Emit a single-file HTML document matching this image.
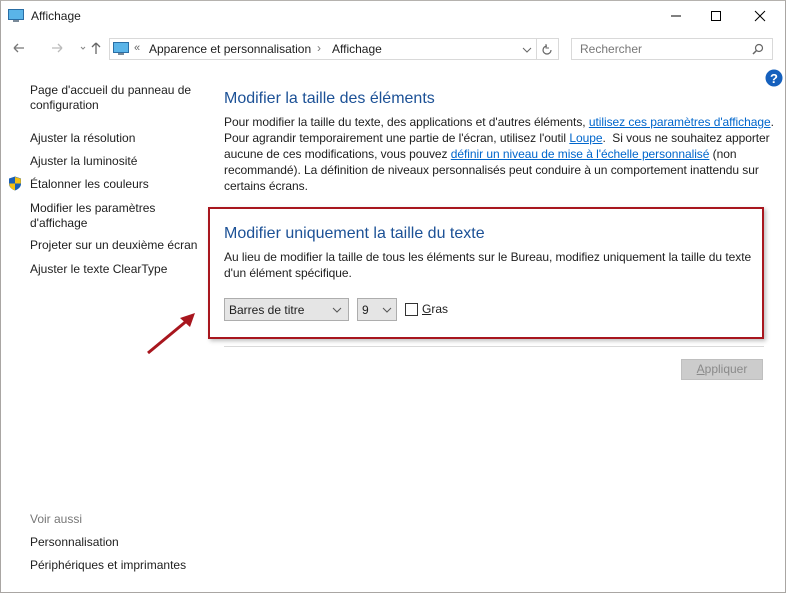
<!DOCTYPE html>
<html><head><meta charset="utf-8"><style>
*{margin:0;padding:0;box-sizing:border-box}
body{width:786px;height:593px;background:#fff;font-family:"Liberation Sans",sans-serif;font-size:12px;color:#1e1e1e;position:relative;overflow:hidden}
.a{position:absolute;white-space:nowrap}
.l{color:#0066cc;text-decoration:underline}
.side{color:#1e1e1e}
.h{color:#1c5196;font-size:16px}
</style></head><body>
<div class="a" style="left:0;top:0;width:786px;height:593px;border:1px solid #a9a6a3;border-top:1px solid #b5b2ae"></div>
<svg class="a" style="left:8px;top:9px" width="16" height="14"><rect x="0.5" y="0.5" width="15" height="10" fill="#5ab4e8" stroke="#2a6ea5"/><rect x="5" y="11" width="6" height="2" fill="#7a8a99"/></svg>
<div class="a" style="left:31px;top:9px;font-size:12px">Affichage</div>
<svg class="a" style="left:668px;top:8px" width="110" height="16"><line x1="3" y1="8" x2="13" y2="8" stroke="#000"/><rect x="43.5" y="3.5" width="9" height="9" fill="none" stroke="#000"/><path d="M87 3 L97 13 M97 3 L87 13" stroke="#000"/></svg>
<svg class="a" style="left:10px;top:40px" width="95" height="16"><path d="M4 8h10M4 8l4-4M4 8l4 4" stroke="#777" fill="none" stroke-width="1.3"/><path d="M42 8h10M52 8l-4-4M52 8l-4 4" stroke="#bbb" fill="none" stroke-width="1.3"/><path d="M71 7l2 2 2-2" stroke="#888" fill="none"/><path d="M86 3v11M86 3l-4 4M86 3l4 4" stroke="#666" fill="none" stroke-width="1.3"/></svg>
<div class="a" style="left:109px;top:38px;width:450px;height:22px;border:1px solid #d9d9d9"></div>
<div class="a" style="left:536px;top:38px;width:1px;height:22px;background:#d9d9d9"></div>
<svg class="a" style="left:113px;top:42px" width="18" height="14"><rect x="0.5" y="0.5" width="15" height="10" fill="#5ab4e8" stroke="#2a6ea5"/><rect x="5" y="11" width="6" height="2" fill="#7a8a99"/></svg>
<div class="a" style="left:134px;top:42px;color:#666;font-size:11px">«</div>
<div class="a" style="left:149px;top:42px">Apparence et personnalisation</div>
<div class="a" style="left:317px;top:41px;color:#777">›</div>
<div class="a" style="left:332px;top:42px">Affichage</div>
<svg class="a" style="left:522px;top:44px" width="34" height="12"><path d="M1 4l4 4 4-4" stroke="#666" fill="none"/><path d="M25 2a4 4 0 1 0 4 4" stroke="#666" fill="none" stroke-width="1.2"/><path d="M24 0v4h3" stroke="#666" fill="none"/></svg>
<div class="a" style="left:571px;top:38px;width:202px;height:22px;border:1px solid #d9d9d9"></div>
<div class="a" style="left:580px;top:42px;color:#777">Rechercher</div>
<svg class="a" style="left:752px;top:43px" width="12" height="12"><circle cx="7" cy="5" r="3.5" stroke="#666" fill="none" stroke-width="1.2"/><path d="M4.5 7.5L1 11" stroke="#666" stroke-width="1.5"/></svg>
<svg class="a" style="left:765px;top:69px" width="18" height="18"><circle cx="9" cy="9" r="8.5" fill="#1560bd"/><text x="9" y="14" text-anchor="middle" font-family="Liberation Sans" font-weight="bold" font-size="13" fill="#fff">?</text></svg>
<div class="a side" style="left:30px;top:83px;line-height:15px">Page d'accueil du panneau de<br>configuration</div>
<div class="a side" style="left:30px;top:131px">Ajuster la résolution</div>
<div class="a side" style="left:30px;top:154px">Ajuster la luminosité</div>
<svg class="a" style="left:8px;top:176px" width="14" height="15"><path d="M7 0.5L13 2.5V8c0 3-3 5.5-6 6.5C4 13.5 1 11 1 8V2.5z" fill="#1a5fb4"/><path d="M7 1v6.5H1.2V8C1.5 11 4 13.4 7 14.4V7.5h5.8V2.8z" fill="#f2c012"/></svg>
<div class="a side" style="left:30px;top:177px">Étalonner les couleurs</div>
<div class="a side" style="left:30px;top:201px;line-height:15px">Modifier les paramètres<br>d'affichage</div>
<div class="a side" style="left:30px;top:238px">Projeter sur un deuxième écran</div>
<div class="a side" style="left:30px;top:262px">Ajuster le texte ClearType</div>
<div class="a" style="left:30px;top:512px;color:#777">Voir aussi</div>
<div class="a side" style="left:30px;top:535px">Personnalisation</div>
<div class="a side" style="left:30px;top:558px">Périphériques et imprimantes</div>
<div class="a h" style="left:224px;top:90px">Modifier la taille des éléments</div>
<div class="a" style="left:224px;top:114px;line-height:16px;letter-spacing:-0.05px">Pour modifier la taille du texte, des applications et d'autres éléments, <span class="l">utilisez ces paramètres d'affichage</span>.<br>Pour agrandir temporairement une partie de l'écran, utilisez l'outil <span class="l">Loupe</span>.&nbsp; Si vous ne souhaitez apporter<br>aucune de ces modifications, vous pouvez <span class="l">définir un niveau de mise à l'échelle personnalisé</span> (non<br>recommandé). La définition de niveaux personnalisés peut conduire à un comportement inattendu sur<br>certains écrans.</div>
<div class="a" style="left:208px;top:207px;width:556px;height:132px;border:2px solid #a8161e;box-shadow:2px 2px 4px rgba(0,0,0,.25)"></div>
<div class="a h" style="left:224px;top:225px">Modifier uniquement la taille du texte</div>
<div class="a" style="left:224px;top:249px;line-height:16px;letter-spacing:-0.05px">Au lieu de modifier la taille de tous les éléments sur le Bureau, modifiez uniquement la taille du texte<br>d'un élément spécifique.</div>
<div class="a" style="left:224px;top:298px;width:125px;height:23px;border:1px solid #adadad;background:#e5e5e5"></div>
<div class="a" style="left:229px;top:303px">Barres de titre</div>
<svg class="a" style="left:332px;top:306px" width="10" height="8"><path d="M1 2l4 4 4-4" stroke="#555" fill="none"/></svg>
<div class="a" style="left:357px;top:298px;width:40px;height:23px;border:1px solid #adadad;background:#e5e5e5"></div>
<div class="a" style="left:362px;top:303px">9</div>
<svg class="a" style="left:382px;top:306px" width="10" height="8"><path d="M1 2l4 4 4-4" stroke="#555" fill="none"/></svg>
<div class="a" style="left:405px;top:303px;width:13px;height:13px;border:1px solid #333;background:#fff"></div>
<div class="a" style="left:422px;top:302px"><u>G</u>ras</div>
<div class="a" style="left:224px;top:346px;width:540px;height:1px;background:#d9d9d9"></div>
<div class="a" style="left:681px;top:359px;width:82px;height:21px;border:1px solid #bfbfbf;background:#ccc;color:#8a8a8a;text-align:center;line-height:19px"><u>A</u>ppliquer</div>
<svg class="a" style="left:145px;top:310px" width="52" height="46"><path d="M3 43L44 9" stroke="#a8161e" stroke-width="3"/><path d="M50 3L35 8L45 17z" fill="#a8161e"/></svg>
</body></html>
